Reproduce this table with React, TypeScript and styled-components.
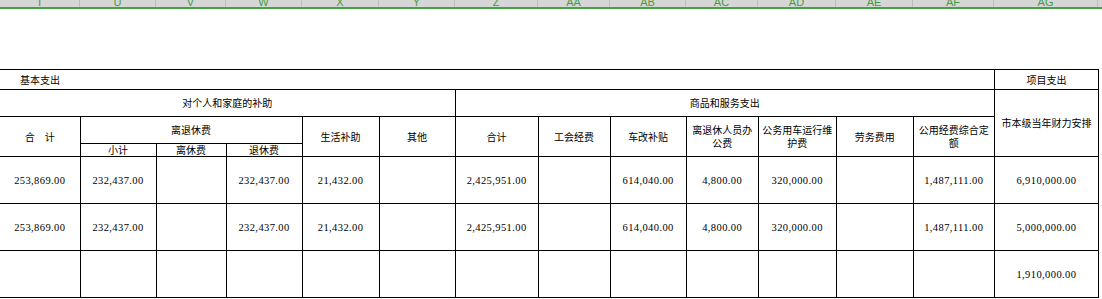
import React from "react";
import styled, { createGlobalStyle } from "styled-components";

const GlobalStyle = createGlobalStyle`
  html, body { margin: 0; padding: 0; background: #ffffff; }
  body { width: 1102px; height: 299px; overflow: hidden; }
`;

const widths = [80, 76, 70, 76, 77, 76, 83, 72, 76, 72, 78, 77, 81, 104];
const letters = ["T", "U", "V", "W", "X", "Y", "Z", "AA", "AB", "AC", "AD", "AE", "AF", "AG"];

const Page = styled.div`
  width: 1102px;
  height: 299px;
  display: flex;
  flex-direction: column;
  background: #fff;
`;

const ColHeader = styled.div`
  display: flex;
  height: 7px;
  background: #d6d6d6;
  overflow: hidden;
  flex-shrink: 0;
`;

const ColCell = styled.div<{ $w: number }>`
  width: ${(p) => p.$w}px;
  flex-shrink: 0;
  height: 7px;
  box-sizing: border-box;
  border-right: 1px solid #bdbdbd;
  display: flex;
  align-items: flex-end;
  justify-content: center;
  overflow: hidden;
`;

const ColLetter = styled.span`
  font-family: "Liberation Sans", Arial, sans-serif;
  font-size: 11px;
  line-height: 9px;
  color: #3f9f3f;
`;

const GreenLine = styled.div`
  height: 2px;
  background: #43a343;
  flex-shrink: 0;
`;

const Spacer = styled.div`
  height: 60px;
  flex-shrink: 0;
`;

const Sheet = styled.table`
  border-collapse: collapse;
  table-layout: fixed;
  width: 1099px;
  font-family: "Noto Sans CJK SC", "DejaVu Sans", sans-serif;
  font-size: 10px;
  color: #000;
`;

const Row = styled.tr<{ $h: number }>`
  height: ${(p) => p.$h}px;
`;

const Cell = styled.td<{ $left?: boolean; $noLeft?: boolean }>`
  border: 1px solid #000;
  ${(p) => (p.$noLeft ? "border-left: none;" : "")}
  padding: 0 3px;
  text-align: ${(p) => (p.$left ? "left" : "center")};
  ${(p) => (p.$left ? "padding-left: 20px;" : "")}
  vertical-align: middle;
  line-height: 12px;
  white-space: nowrap;
  overflow: hidden;
`;

const Lines = styled.div`
  display: flex;
  flex-direction: column;
  align-items: center;
  gap: 1px;
  line-height: 12px;
`;

const Num = styled.span`
  font-family: "Liberation Serif", "Times New Roman", serif;
  font-size: 10.5px;
  letter-spacing: 0.4px;
`;

type DataRow = (string | null)[];

const dataRows: DataRow[] = [
  ["253,869.00", "232,437.00", null, "232,437.00", "21,432.00", null, "2,425,951.00", null, "614,040.00", "4,800.00", "320,000.00", null, "1,487,111.00", "6,910,000.00"],
  ["253,869.00", "232,437.00", null, "232,437.00", "21,432.00", null, "2,425,951.00", null, "614,040.00", "4,800.00", "320,000.00", null, "1,487,111.00", "5,000,000.00"],
  [null, null, null, null, null, null, null, null, null, null, null, null, null, "1,910,000.00"],
];

const ML = ({ lines }: { lines: string[] }) => (
  <Lines>
    {lines.map((l, i) => (
      <span key={i}>{l}</span>
    ))}
  </Lines>
);

export default function App() {
  return (
    <>
      <GlobalStyle />
      <Page>
        <ColHeader>
          {letters.map((l, i) => (
            <ColCell key={l} $w={widths[i]}>
              <ColLetter>{l}</ColLetter>
            </ColCell>
          ))}
        </ColHeader>
        <GreenLine />
        <Spacer />
        <Sheet>
          <colgroup>
            {widths.map((w, i) => (
              <col key={i} style={{ width: w }} />
            ))}
          </colgroup>
          <tbody>
            <Row $h={20}>
              <Cell colSpan={13} $left $noLeft>基本支出</Cell>
              <Cell>项目支出</Cell>
            </Row>
            <Row $h={27}>
              <Cell colSpan={6} $noLeft>对个人和家庭的补助</Cell>
              <Cell colSpan={7}>商品和服务支出</Cell>
              <Cell rowSpan={3}>市本级当年财力安排</Cell>
            </Row>
            <Row $h={27}>
              <Cell rowSpan={2} $noLeft>合　计</Cell>
              <Cell colSpan={3}>离退休费</Cell>
              <Cell rowSpan={2}>生活补助</Cell>
              <Cell rowSpan={2}>其他</Cell>
              <Cell rowSpan={2}>合计</Cell>
              <Cell rowSpan={2}>工会经费</Cell>
              <Cell rowSpan={2}>车改补贴</Cell>
              <Cell rowSpan={2}><ML lines={["离退休人员办", "公费"]} /></Cell>
              <Cell rowSpan={2}><ML lines={["公务用车运行维", "护费"]} /></Cell>
              <Cell rowSpan={2}>劳务费用</Cell>
              <Cell rowSpan={2}><ML lines={["公用经费综合定", "额"]} /></Cell>
            </Row>
            <Row $h={13}>
              <Cell>小计</Cell>
              <Cell>离休费</Cell>
              <Cell>退休费</Cell>
            </Row>
            {dataRows.map((r, ri) => (
              <Row $h={47} key={ri}>
                {r.map((v, ci) => (
                  <Cell key={ci} $noLeft={ci === 0}>
                    {v && <Num>{v}</Num>}
                  </Cell>
                ))}
              </Row>
            ))}
          </tbody>
        </Sheet>
      </Page>
    </>
  );
}
